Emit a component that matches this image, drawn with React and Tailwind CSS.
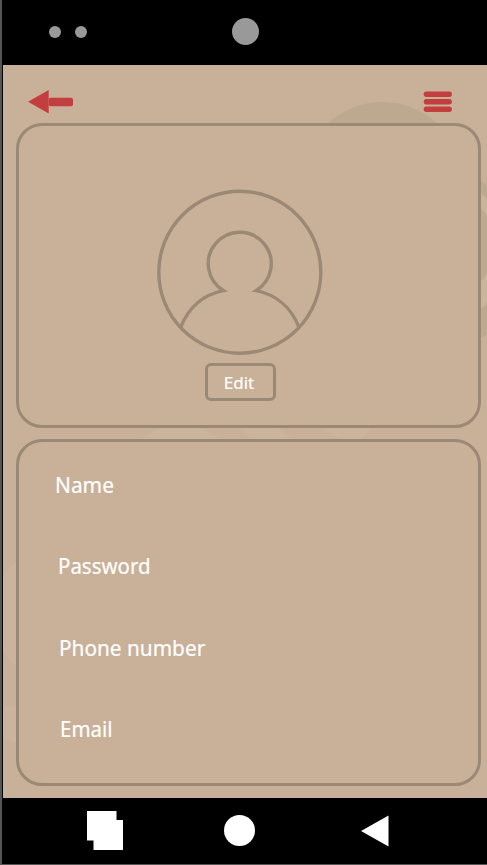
const FIELDS = [
  { label: "Name", offset: "pl-[36px]", fit: "scale-x-[0.95]" },
  { label: "Password", offset: "pl-[38.5px]", fit: "scale-x-[0.93]" },
  { label: "Phone number", offset: "pl-[39.5px]", fit: "scale-x-[0.945]" },
  { label: "Email", offset: "pl-[40.5px]", fit: "scale-x-[0.93]" },
];

function StatusBar() {
  return (
    <header className="flex h-[65px] shrink-0 items-center bg-black pb-[2px] pl-[46px]">
      <span className="size-[12px] rounded-full bg-[#999999]" />
      <span className="ml-[14px] size-[12px] rounded-full bg-[#999999]" />
      <span className="ml-[145px] size-[27px] rounded-full bg-[#999999]" />
    </header>
  );
}

function Backdrop() {
  return (
    <svg className="absolute inset-0" width="484" height="733" viewBox="3 65 484 733" aria-hidden="true">
      <circle cx="382.5" cy="183" r="81" fill="#bda990" />
      <path d="M478 180Q484 182 487 185V335L478 339Z" fill="#bda990" />
      <path d="M478 192Q484 195 487 199V303Q484 307 478 311Z" fill="#cab59c" />
      <path d="M478 205Q484 211 487 216V274Q484 279 478 284Z" fill="#bda990" />
      <path d="M141 440Q150 432 162 427Q180 421 198 427Q209 432 221 440Z" fill="#cab59c" />
      <path d="M237 427H277L292 440H252Z" fill="#cab59c" />
      <path d="M318 427H372L360 440H343Z" fill="#cab59c" />
      <path d="M3 577Q8 569 18 560V667Q8 660 3 652Z" fill="#cab59c" />
      <path d="M3 705L18 707V743L3 738Z" fill="#cab59c" />
      <path d="M3 787L7 791L3 797Z" fill="#cab59c" />
    </svg>
  );
}

function Avatar() {
  return (
    <svg width="166" height="166" viewBox="157 189 166 166" fill="none" stroke="#9b8976" strokeWidth="3.4">
      <circle cx="239.8" cy="272.2" r="81" />
      <path d="M180.8 327C189 307 204 294.500 223.500 290.700A31.500 31.500 0 1 1 256 290.700C275.500 294.500 291 307 298.800 327" strokeMiterlimit="8" />
    </svg>
  );
}

export default function App() {
  return (
    <div className="flex h-[865px] w-[487px] flex-col overflow-hidden border-b border-l-2 border-[#555555] bg-black pl-px font-['Noto_Sans',sans-serif] text-white">
      <StatusBar />
      <main className="relative h-[733px] shrink-0 bg-[#c8b198]">
        <Backdrop />
        <div className="relative flex h-full flex-col">
          <nav className="flex h-[58px] shrink-0 items-start justify-between pt-[25px] pr-[35px] pl-[25px]">
            <button aria-label="Back">
              <svg width="45" height="24" viewBox="0 0 45 24" fill="#c33e3e">
                <path d="M0 11.800L20.700 0V23.500Z" />
                <rect x="20.700" y="7.800" width="24.300" height="8.400" rx="2" />
              </svg>
            </button>
            <button aria-label="Menu" className="mt-px">
              <svg width="29" height="22" viewBox="0 0 29 22" fill="#c33e3e">
                <rect x="0.700" y="0.500" width="28.200" height="5.500" rx="2.700" />
                <rect x="0.700" y="8" width="28.200" height="5.500" rx="2.700" />
                <rect x="0.700" y="15.500" width="28.200" height="5.500" rx="2.700" />
              </svg>
            </button>
          </nav>
          <section className="ml-[13px] flex h-[305px] w-[465px] shrink-0 flex-col items-center rounded-[26px] border-3 border-[#9b8976] bg-[#c8b198] pt-[63px] pr-[17px]">
            <Avatar />
            <button className="mt-[8px] flex h-[38px] w-[71px] items-center justify-center rounded-[6px] border-3 border-[#9b8976] pr-[2px] text-[17px] leading-none [-webkit-text-stroke:0.2px_white]">
              <span>Edit</span>
            </button>
          </section>
          <section className="mt-[11px] ml-[13px] flex h-[347px] w-[465px] shrink-0 flex-col rounded-[26px] border-3 border-[#9b8976] bg-[#c8b198] pt-[27px]">
            {FIELDS.map(({ label, offset, fit }) => (
              <div key={label} className={`h-[81.3px] shrink-0 text-[22px] leading-[30px] last:h-[30px] [-webkit-text-stroke:0.2px_white] ${offset}`}>
                <span className={`inline-block origin-left ${fit}`}>{label}</span>
              </div>
            ))}
          </section>
        </div>
      </main>
      <footer className="flex h-[66px] shrink-0 items-center pb-px pl-[83.5px]">
        <svg width="36" height="39" viewBox="0 0 36 39" fill="#ffffff">
          <path d="M0 0H29.500V9H36V39H6.500V29.500H0Z" />
        </svg>
        <span className="ml-[101.5px] size-[31px] rounded-full bg-white" />
        <svg className="ml-[106px]" width="28" height="32" viewBox="0 0 28 32" fill="#ffffff">
          <path d="M0 16L27.500 0.500V31.500Z" />
        </svg>
      </footer>
    </div>
  );
}
